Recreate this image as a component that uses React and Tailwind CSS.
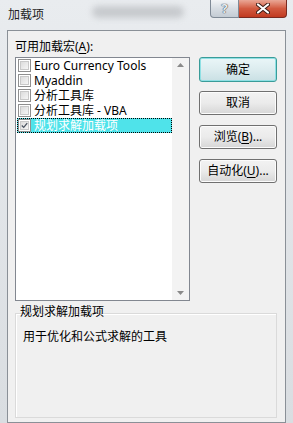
export default function App() {
  const items = [
    { label: "Euro Currency Tools", checked: false },
    { label: "Myaddin", checked: false },
    { label: "分析工具库", checked: false },
    { label: "分析工具库 - VBA", checked: false },
    { label: "规划求解加载项", checked: true, selected: true },
  ];
  return (
    <div className="w-[293px] h-[423px] overflow-hidden flex flex-col bg-gradient-to-b from-[#e9ecef] to-[#d9dde1] text-[12px] leading-[16px] text-black font-['Noto_Sans','Noto_Sans_CJK_SC',sans-serif]">
      {/* Title bar */}
      <div className="h-[30px] flex items-start relative shrink-0">
        <div className="pl-[8px] pt-[7px] text-[12px] leading-[16px] text-[#1e1e1e]">加载项</div>
        <div className="absolute left-[92px] top-[6px] w-[92px] h-[12px] rounded-full bg-[#b9bcc0] blur-[3px] opacity-70"></div>
        <div className="ml-auto mr-[6px] flex">
          <div className="w-[29px] h-[18px] rounded-bl-[4px] border border-t-0 border-[#7f8a96] bg-gradient-to-b from-[#f2f4f6] via-[#d7dde3] to-[#c4ccd4] flex items-center justify-center text-[13px] leading-[13px] font-bold text-[#e9edf0] [text-shadow:0_0_1px_#2b3640,0_0_1px_#2b3640]">
            ?
          </div>
          <div className="w-[48px] h-[18px] rounded-br-[4px] border border-t-0 border-l-0 border-[#7a2a20] bg-gradient-to-b from-[#e9a796] via-[#d25a40] to-[#c13a20] flex items-center justify-center">
            <svg width="14" height="11" viewBox="0 0 14 11">
              <path d="M2 1.5 L12 9.5 M12 1.5 L2 9.5" stroke="#3a1a14" strokeWidth="4" strokeLinecap="round" />
              <path d="M2 1.5 L12 9.5 M12 1.5 L2 9.5" stroke="#ffffff" strokeWidth="2.2" strokeLinecap="round" />
            </svg>
          </div>
        </div>
      </div>

      {/* Client area */}
      <div className="flex-1 mx-[7px] border border-[#8a9097] bg-[#f0f0f0] pl-[7px] pt-[8px] flex flex-col">
        <div className="mb-[2px] h-[16px]">
          可用加载宏(<span className="underline underline-offset-2">A</span>):
        </div>
        <div className="flex gap-[9px]">
          {/* List */}
          <div className="w-[175px] h-[244px] border border-[#828790] bg-white flex">
            <div className="flex-1 flex flex-col">
              {items.map((it) => (
                <div
                  key={it.label}
                  className={
                    "h-[15px] flex items-center ml-[1px] overflow-hidden " +
                    (it.selected
                      ? "bg-[#4fe3ea] text-white outline outline-1 outline-dotted outline-black -outline-offset-1"
                      : "")
                  }
                >
                  <div className="ml-[1px] w-[13px] h-[13px] border border-[#8f8f8f] bg-white p-[1px] shrink-0">
                    <div className="w-full h-full bg-gradient-to-br from-[#dcdcdc] to-[#f6f6f6] border border-[#c9c9c9] flex items-center justify-center">
                      {it.checked && (
                        <svg width="9" height="9" viewBox="0 0 9 9">
                          <path d="M1 4.5 L3.5 7 L8 1.5" fill="none" stroke="#4a5360" strokeWidth="1.6" />
                        </svg>
                      )}
                    </div>
                  </div>
                  <span className="ml-[3px] block h-[15px] whitespace-nowrap leading-[15px]">{it.label}</span>
                </div>
              ))}
            </div>
            <div className="w-[17px] bg-[#f3f3f3] flex flex-col items-center justify-between py-[5px]">
              <svg width="7" height="4" viewBox="0 0 7 4">
                <path d="M0 4 L3.5 0 L7 4 Z" fill="#8a8a8a" />
              </svg>
              <svg width="7" height="4" viewBox="0 0 7 4">
                <path d="M0 0 L3.5 4 L7 0 Z" fill="#8a8a8a" />
              </svg>
            </div>
          </div>

          {/* Buttons */}
          <div className="w-[78px] flex flex-col gap-[10px]">
            <button className="h-[25px] rounded-[3px] border border-[#3a9c99] bg-gradient-to-b from-[#eaf6f8] via-[#dcecef] to-[#c9e0e4] shadow-[inset_0_0_0_1px_#8fe0e4] text-[12px] leading-[16px] -mb-[1px]">
              确定
            </button>
            <button className="h-[24px] rounded-[3px] border border-[#707070] bg-gradient-to-b from-[#f2f2f2] via-[#ebebeb] to-[#d6d6d6] shadow-[inset_0_0_0_1px_#fcfcfc] text-[12px] leading-[16px]">
              取消
            </button>
            <button className="h-[24px] rounded-[3px] border border-[#707070] bg-gradient-to-b from-[#f2f2f2] via-[#ebebeb] to-[#d6d6d6] shadow-[inset_0_0_0_1px_#fcfcfc] text-[12px] leading-[16px]">
              浏览(<span className="underline underline-offset-2">B</span>)...
            </button>
            <button className="h-[24px] rounded-[3px] border border-[#707070] bg-gradient-to-b from-[#f2f2f2] via-[#ebebeb] to-[#d6d6d6] shadow-[inset_0_0_0_1px_#fcfcfc] text-[12px] leading-[16px]">
              自动化(<span className="underline underline-offset-2">U</span>)...
            </button>
          </div>
        </div>

        {/* Group box */}
        <div className="mt-[3px] pl-[5px] relative z-10 h-[16px]">规划求解加载项</div>
        <div className="-mt-[7px] w-[262px] h-[105px] border border-[#dadada] shadow-[inset_1px_1px_0_#ffffff] pt-[15px] pl-[7px]">
          用于优化和公式求解的工具
        </div>
      </div>
    </div>
  );
}
